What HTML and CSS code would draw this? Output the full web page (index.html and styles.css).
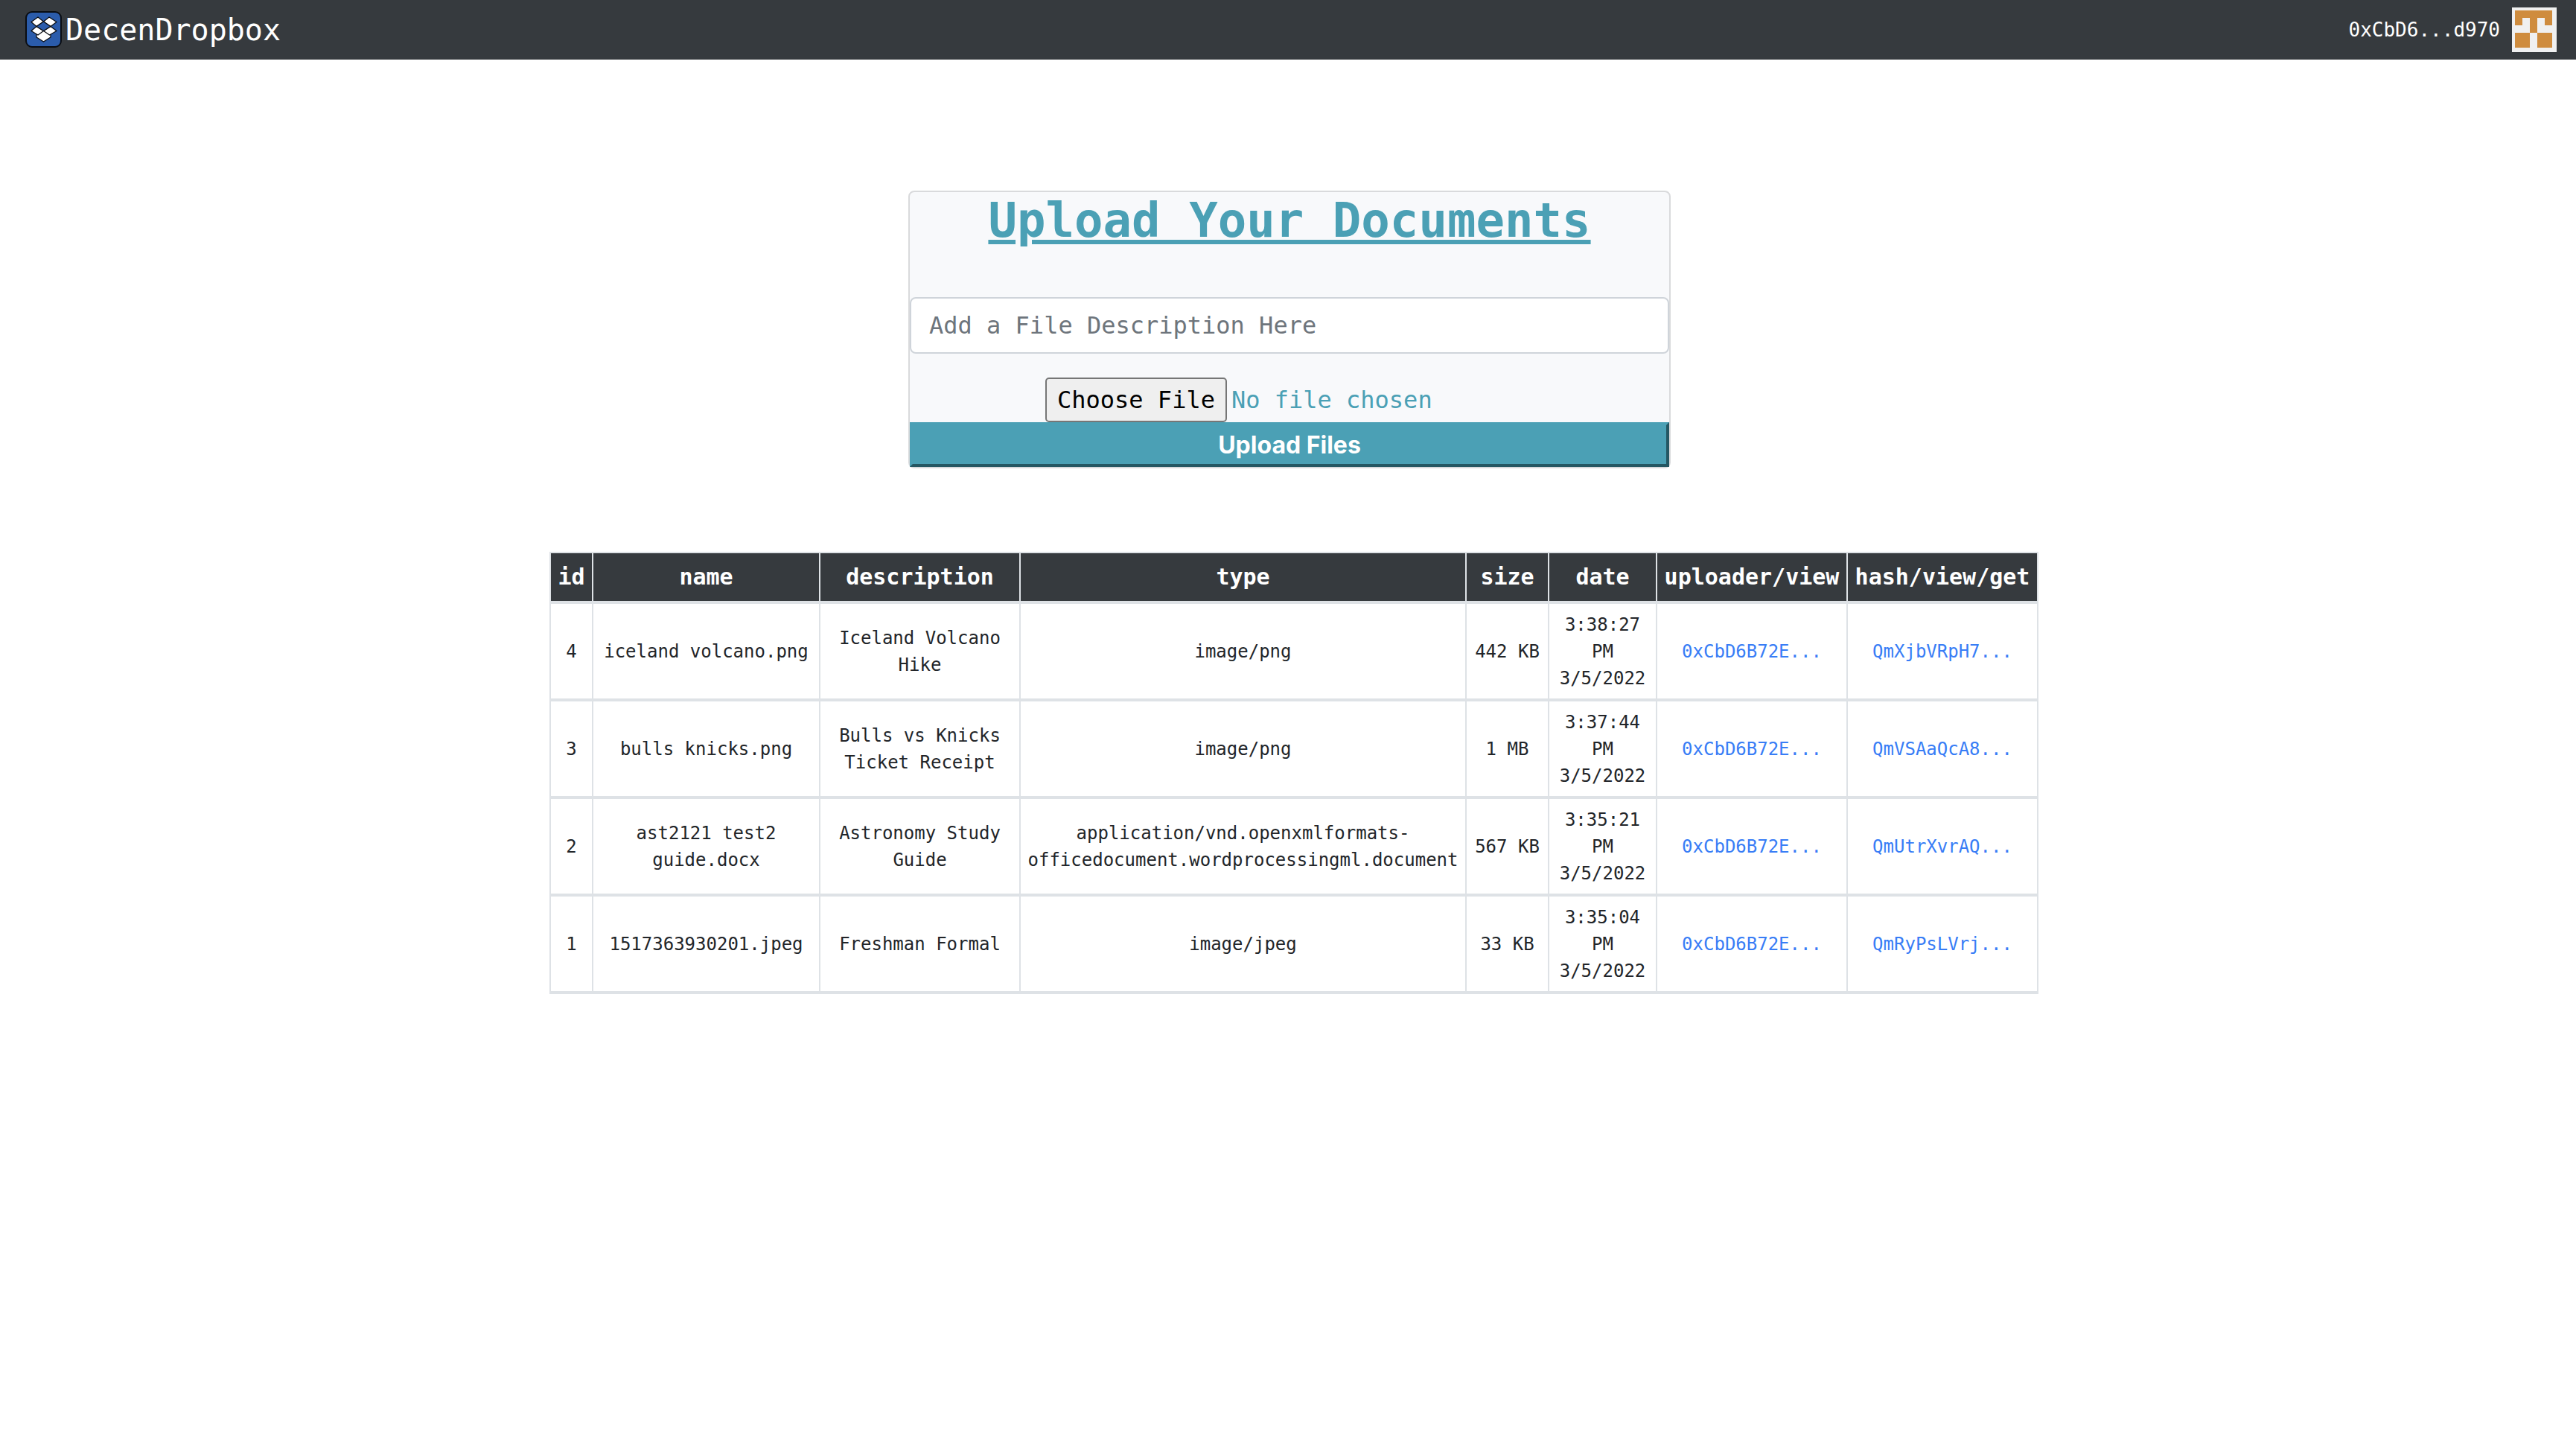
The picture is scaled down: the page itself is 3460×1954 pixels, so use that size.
FILE: index.html
```html
<!DOCTYPE html>
<html lang="en">
<head>
<meta charset="utf-8">
<meta name="viewport" content="width=device-width, initial-scale=1">
<title>DecenDropbox</title>
<link rel="stylesheet" href="styles.css">
</head>
<body>
<nav class="navbar">
  <a class="brand" href="#">
    <svg class="brand-logo" viewBox="0 0 50 50" aria-hidden="true">
      <rect x="1" y="1" width="47" height="47" rx="8" fill="#2b5cab" stroke="#0a0d12" stroke-width="2"/>
      <g fill="#fff" stroke="#0a0d12" stroke-width="1.3" stroke-linejoin="round">
        <path d="M15 31v4l9.500 6 9.500-6v-4l-9.500-5z"/>
        <path d="M17 8l7.500 6-9.500 6.500L8 14.500z"/>
        <path d="M32 8l10 6.500-8 6-9.500-6.500z"/>
        <path d="M15 20.500l9.500 6-7.500 5.500L8 26.500z"/>
        <path d="M34 20.500l8 6-9.500 5.500-8-5.500z"/>
        <path d="M15 20.500l9.500-6.500 9.500 6.500-9.500 6z" fill="#2b5cab"/>
      </g>
    </svg>
    <span>DecenDropbox</span>
  </a>
  <a class="account" href="#">
    <span>0xCbD6...d970</span>
    <svg class="identicon" viewBox="0 0 60 60" aria-hidden="true">
      <rect width="60" height="60" fill="#f0f0f0"/>
      <path d="M4 4h50v20H44V14H34v20H24V14H14v10H4zM4 34h20v20H4zM34 34h20v20H34z" fill="#cf8c3e"/>
    </svg>
  </a>
</nav>

<main class="content">
  <section class="card">
    <h2 class="card-title">Upload Your Documents</h2>
    <form class="upload-form">
      <input class="description-input" type="text" placeholder="Add a File Description Here" aria-label="File description">
      <input class="file-input" type="file" aria-label="File">
      <button class="upload-button" type="submit">Upload Files</button>
    </form>
  </section>

  <table class="files">
    <colgroup>
      <col class="col-id"><col class="col-name"><col class="col-description"><col class="col-type">
      <col class="col-size"><col class="col-date"><col class="col-link"><col class="col-link">
    </colgroup>
    <thead>
      <tr>
        <th scope="col">id</th><th scope="col">name</th><th scope="col">description</th><th scope="col">type</th>
        <th scope="col">size</th><th scope="col">date</th><th scope="col">uploader/view</th><th scope="col">hash/view/get</th>
      </tr>
    </thead>
    <tbody>
      <tr>
        <td>4</td><td>iceland volcano.png</td><td>Iceland Volcano Hike</td><td>image/png</td>
        <td>442 KB</td><td>3:38:27 PM 3/5/2022</td><td><a href="#">0xCbD6B72E...</a></td><td><a href="#">QmXjbVRpH7...</a></td>
      </tr>
      <tr>
        <td>3</td><td>bulls knicks.png</td><td>Bulls vs Knicks Ticket Receipt</td><td>image/png</td>
        <td>1 MB</td><td>3:37:44 PM 3/5/2022</td><td><a href="#">0xCbD6B72E...</a></td><td><a href="#">QmVSAaQcA8...</a></td>
      </tr>
      <tr>
        <td>2</td><td>ast2121 test2 guide.docx</td><td>Astronomy Study Guide</td><td>application/vnd.openxmlformats-officedocument.wordprocessingml.document</td>
        <td>567 KB</td><td>3:35:21 PM 3/5/2022</td><td><a href="#">0xCbD6B72E...</a></td><td><a href="#">QmUtrXvrAQ...</a></td>
      </tr>
      <tr>
        <td>1</td><td>1517363930201.jpeg</td><td>Freshman Formal</td><td>image/jpeg</td>
        <td>33 KB</td><td>3:35:04 PM 3/5/2022</td><td><a href="#">0xCbD6B72E...</a></td><td><a href="#">QmRyPsLVrj...</a></td>
      </tr>
    </tbody>
  </table>
</main>
</body>
</html>
```
FILE: styles.css
```css
*,
*::before,
*::after {
  box-sizing: border-box;
}

body {
  margin: 0;
  background: #fff;
  color: #222529;
  font-family: "DejaVu Sans Mono", "Liberation Mono", monospace;
  font-size: 32px;
  line-height: 48px;
}

.navbar {
  display: flex;
  align-items: center;
  justify-content: space-between;
  min-height: 80px;
  padding: 0 26px 0 34px;
  background: #363a3e;
}

.brand,
.account {
  display: flex;
  align-items: center;
  color: #fff;
  text-decoration: none;
}

.brand {
  gap: 4px;
  font-size: 40px;
}

.account {
  gap: 16px;
  font-size: 26px;
}

.brand-logo {
  width: 50px;
  height: 50px;
}

.identicon {
  width: 60px;
  height: 60px;
}

.content {
  max-width: 2048px;
  margin: 0 auto;
  padding: 176px 28px 0 32px;
}

.card {
  max-width: 1024px;
  margin: 0 auto 112px;
  border: 2px solid #d9dadc;
  border-radius: 8px;
  background: #f8f9fb;
  color: #4ba0b5;
}

.card-title {
  margin: 0 0 64px;
  font-size: 64px;
  font-weight: bold;
  line-height: 77px;
  text-align: center;
  text-decoration: underline;
}

.upload-form {
  display: flex;
  flex-direction: column;
  align-items: center;
}

.description-input {
  width: 100%;
  height: 76px;
  margin: 0 0 32px;
  padding: 12px 24px;
  border: 2px solid #cfd4da;
  border-radius: 8px;
  background: #fff;
  color: #495057;
  font: inherit;
}

.description-input::placeholder {
  color: #6e757c;
  opacity: 1;
}

.file-input {
  width: 656px;
  max-width: 100%;
  height: 60px;
  color: inherit;
  font: inherit;
}

.file-input::file-selector-button {
  height: 60px;
  margin: 0 6px 0 0;
  padding: 0 14px;
  border: 2px solid #767676;
  border-radius: 5px;
  background: #efefef;
  color: #000;
  font: inherit;
}

.upload-button {
  width: 100%;
  height: 60px;
  padding: 0;
  border: 4px solid;
  border-color: #4ba0b5 #255763 #255763 #4ba0b5;
  background: #4ba0b5;
  color: #fff;
  font-family: Inter, "Liberation Sans", sans-serif;
  font-size: 32px;
  font-weight: bold;
}

.files {
  width: 2000px;
  table-layout: fixed;
  border-collapse: collapse;
  text-align: center;
  font-size: 24px;
  line-height: 36px;
}

.files th,
.files td {
  padding: 10px 9px 9px;
  border: 2px solid #dee2e6;
  border-bottom-width: 4px;
}

.files th {
  padding: 9px 9px 10px;
  background: #363a3e;
  color: #fff;
  font-size: 30px;
  line-height: 45px;
}

.files a {
  color: #387df6;
  text-decoration: none;
}

.col-id { width: 57px; }
.col-name { width: 305px; }
.col-description { width: 269px; }
.col-type { width: 599px; }
.col-size { width: 111px; }
.col-date { width: 145px; }
.col-link { width: 256px; }
```
